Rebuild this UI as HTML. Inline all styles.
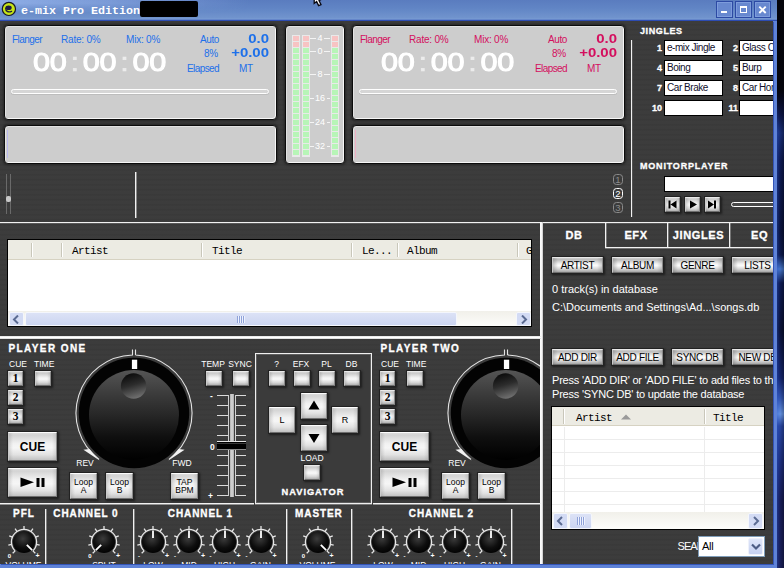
<!DOCTYPE html>
<html><head><meta charset="utf-8"><title>e-mix Pro Edition</title>
<style>
html,body{margin:0;padding:0;}
body{width:784px;height:568px;overflow:hidden;position:relative;background:#0b1640;font-family:"Liberation Sans",sans-serif;}
div,span{box-sizing:border-box;}
.a{position:absolute;}
#wall{position:absolute;left:777px;top:0;width:7px;height:568px;background:linear-gradient(180deg,#04040a 0,#05050c 90px,#0c1440 115px,#1a3078 133px,#0e1a50 160px,#0a1238 230px,#0c1848 255px,#4a7cd0 269px,#0e1a50 283px,#0a1030 330px,#14246a 378px,#3558b4 398px,#6c9cec 414px,#2a48a4 426px,#1e3080 460px,#181c54 500px,#1a1e56 568px);}
#wall2{position:absolute;left:777px;top:95px;width:7px;height:473px;background:linear-gradient(90deg,rgba(40,80,200,.4) 0,rgba(20,40,120,.1) 45%,rgba(0,0,0,.3) 100%);-webkit-mask-image:linear-gradient(transparent 0,#000 35px);mask-image:linear-gradient(transparent 0,#000 35px);}
#win{position:absolute;left:0;top:0;width:777px;height:568px;background:#5f83d8;overflow:hidden;}
#tb{position:absolute;left:0;top:0;width:777px;height:21px;background:linear-gradient(#5a7cbf 0,#6185c5 40%,#7194cd 85%,#7a9dd4 92%,#2d4cb2 95%,#2d4cb2 98%,#3a4630 100%);}
#tbh{position:absolute;left:0;top:0;width:260px;height:13px;background:linear-gradient(90deg,rgba(150,180,235,.85) 0,rgba(150,180,235,.6) 90px,rgba(150,180,235,0) 250px);-webkit-mask-image:linear-gradient(#000 0,#000 25%,transparent 100%);mask-image:linear-gradient(#000 0,#000 25%,transparent 100%);}
#main{position:absolute;left:0;top:21px;width:773px;height:543px;overflow:hidden;box-shadow:1px 1px 0 #3455b8;background-color:#3b3b3b;
 background-image:repeating-linear-gradient(180deg,rgba(255,255,255,.025) 0,rgba(0,0,0,.03) 1px,rgba(255,255,255,.02) 2px,rgba(0,0,0,.04) 3px,rgba(255,255,255,0) 5px);}
.lbl{position:absolute;color:#fff;-webkit-text-stroke:.3px #fff;font-weight:bold;font-size:10px;white-space:nowrap;line-height:12px;height:12px;}
.l12{font-size:12px;line-height:14px;height:14px;}
.c{text-align:center;}
.sm{position:absolute;color:#fff;font-size:8.5px;white-space:nowrap;line-height:10px;height:10px;}
.disp{position:absolute;background:#cdcdcd;border-radius:4px;border:1px solid #0c0c0c;box-shadow:inset 1px 1px 0 #e2e2e2,inset -1px -1px 0 #f6f6f6,0 0 0 1px #2c2c2c,0 0 2px 2px rgba(0,0,0,.18);}
.btn{position:absolute;border:1px solid #e9e9e9;border-right-color:#8a8a8a;border-bottom-color:#6e6e6e;border-left-color:#c9c9c9;background:linear-gradient(90deg,rgba(110,110,110,.25) 0,rgba(110,110,110,0) 3px,rgba(110,110,110,0) calc(100% - 3px),rgba(110,110,110,.2) 100%),linear-gradient(#d6d6d6 0,#cdcdcd 12%,#f1f1f1 42%,#f8f8f8 55%,#d9d9d9 80%,#b0b0b0 100%);box-shadow:0 0 0 1px #222,1px 1px 2px 1px #1c1c1c;color:#000;text-align:center;white-space:nowrap;overflow:hidden;}
.bb{background:linear-gradient(90deg,rgba(110,110,110,.22) 0,rgba(110,110,110,0) 4px,rgba(110,110,110,0) calc(100% - 4px),rgba(110,110,110,.18) 100%),linear-gradient(#dcdcdc 0,#d4d4d4 8%,#f2f2f2 40%,#f6f6f6 55%,#e2e2e2 80%,#c2c2c2 100%);border-top-color:#fcfcfc;}
.tb{background:linear-gradient(90deg,rgba(110,110,110,.4) 0,rgba(110,110,110,0) 5px,rgba(110,110,110,0) calc(100% - 5px),rgba(110,110,110,.3) 100%),linear-gradient(#cfcfcf 0,#bcbcbc 12%,#f3f3f3 42%,#fcfcfc 55%,#d2d2d2 80%,#a4a4a4 100%);font-size:10px;line-height:15px;letter-spacing:-.3px;}
.wl{position:absolute;background:#f2f2f2;}
.bt{position:absolute;white-space:nowrap;font-size:10px;line-height:12px;height:12px;letter-spacing:-.3px;}
.blue{color:#1d70ea;}
.red{color:#d40f5e;}
.big{position:absolute;color:#fff;-webkit-text-stroke:1px #fff;font-size:25.5px;line-height:30px;height:30px;white-space:nowrap;letter-spacing:-.28px;transform-origin:0 0;transform:scaleX(1.2);}
.big span{display:inline-block;width:13.9px;text-align:center;letter-spacing:0;margin-right:-.28px;color:#ececec;-webkit-text-stroke:.6px #ececec;}
.jb{position:absolute;background:#fff;border:1px solid #000;height:16px;font-size:10px;line-height:13px;color:#10102c;padding-left:2px;letter-spacing:-.45px;white-space:nowrap;overflow:hidden;}
.wt{position:absolute;color:#fff;font-size:11px;line-height:13px;height:13px;white-space:nowrap;letter-spacing:0;}
.mono{position:absolute;font-family:"Liberation Mono",monospace;font-size:11px;line-height:12px;height:12px;color:#000;white-space:nowrap;letter-spacing:-.6px;}
.hd{position:absolute;background:#ecebe3;}
.hs{position:absolute;width:1px;background:#c9c7ba;box-shadow:1px 0 0 #fff;}
</style></head><body>
<div id="wall"></div><div id="wall2"></div>
<div id="win">
<div id="tb">
<div id="tbh"></div>
<svg class="a" style="left:312px;top:0" width="14" height="8" viewBox="0 0 14 8"><path d="M2.2 -1 L2.2 3.4 L4.6 1.6 L6.6 5.6 L9 4.6 L7 0.6 L10 -1 Z" fill="#fff" stroke="#0a0a14" stroke-width="1.3"/></svg>
<svg class="a" style="left:0;top:0" width="18" height="18" viewBox="0 0 18 18"><circle cx="8.9" cy="8.9" r="6.6" fill="#c7e516" stroke="#15162a" stroke-width="1.2"/><ellipse cx="8.6" cy="7.7" rx="3.1" ry="2.3" fill="#1d1d42"/><path d="M5.7 8.2 C5.6 11.2 8 12.8 11.6 11.3" fill="none" stroke="#1d1d36" stroke-width="1.3" stroke-linecap="round"/></svg>
<div class="a" style="left:21px;top:3.7px;font-family:'Liberation Mono',monospace;font-weight:bold;font-size:11.67px;line-height:14px;color:#fff;white-space:nowrap;letter-spacing:0">e-mix Pro Edition</div>
<div class="a" style="left:140px;top:1px;width:58px;height:16px;background:#000;border-radius:2px"></div>
<div class="a" style="left:716px;top:1px;width:17px;height:17px;border:1px solid #2c4aa4;background:#6788cf;box-shadow:inset 0 0 0 1px #7d9cdc"></div>
<div class="a" style="left:735px;top:1px;width:17px;height:17px;border:1px solid #2c4aa4;background:#6788cf;box-shadow:inset 0 0 0 1px #7d9cdc"></div>
<div class="a" style="left:754px;top:1px;width:17px;height:17px;border:1px solid #2c4aa4;background:#6788cf;box-shadow:inset 0 0 0 1px #7d9cdc"></div>
<div class="a" style="left:721px;top:10.5px;width:5.5px;height:2.5px;background:#fff"></div>
<div class="a" style="left:740px;top:6px;width:7px;height:7px;border:1px solid #fff;border-top-width:2px"></div>
<svg class="a" style="left:758px;top:5px" width="9" height="9" viewBox="0 0 9 9"><path d="M1.3 1.6 L7.7 8 M7.7 1.6 L1.3 8" stroke="#fff" stroke-width="1.9"/></svg>
</div>
<div id="main">
<div class="disp" style="left:4px;top:4px;width:273px;height:95px"></div>
<div class="disp" style="left:4px;top:104px;width:273px;height:39px"></div>
<div class="a" style="left:7px;top:109px;width:1px;height:28px;background:#b9b9ee"></div>
<div class="bt blue" style="left:12px;top:12.600000000000001px;letter-spacing:-.55px">Flanger</div>
<div class="bt blue" style="left:61px;top:12.600000000000001px;letter-spacing:-.2px">Rate: 0%</div>
<div class="bt blue" style="left:126px;top:12.600000000000001px;letter-spacing:-.2px">Mix: 0%</div>
<div class="bt blue" style="left:200px;top:12.600000000000001px;letter-spacing:-.4px">Auto</div>
<div class="bt blue" style="left:204px;top:26.6px">8%</div>
<div class="bt blue" style="left:187px;top:41.6px;letter-spacing:-.58px">Elapsed</div>
<div class="bt blue" style="left:239px;top:41.6px">MT</div>
<div class="bt blue" style="left:218px;top:11.000000000000002px;width:51px;text-align:right;font-weight:bold;font-size:13px;letter-spacing:0;line-height:13px;height:13px;transform:scaleX(1.15);transform-origin:100% 0">0.0</div>
<div class="bt blue" style="left:218px;top:25.0px;width:51px;text-align:right;font-weight:bold;font-size:13px;letter-spacing:0;line-height:13px;height:13px;transform:scaleX(1.15);transform-origin:100% 0">+0.00</div>
<div class="big" style="left:32.9px;top:26px">00<span>:</span>00<span>:</span>00</div>
<div class="a" style="left:11px;top:68px;width:258px;height:5px;border:1px solid #fff;border-radius:3px;background:#d6d6d6;box-shadow:0 1px 0 #bdbdbd"></div>
<div class="disp" style="left:352px;top:4px;width:273px;height:95px"></div>
<div class="disp" style="left:352px;top:104px;width:273px;height:39px"></div>
<div class="a" style="left:355px;top:109px;width:1px;height:28px;background:#eeb0c4"></div>
<div class="bt red" style="left:360px;top:12.600000000000001px;letter-spacing:-.55px">Flanger</div>
<div class="bt red" style="left:409px;top:12.600000000000001px;letter-spacing:-.2px">Rate: 0%</div>
<div class="bt red" style="left:474px;top:12.600000000000001px;letter-spacing:-.2px">Mix: 0%</div>
<div class="bt red" style="left:548px;top:12.600000000000001px;letter-spacing:-.4px">Auto</div>
<div class="bt red" style="left:552px;top:26.6px">8%</div>
<div class="bt red" style="left:535px;top:41.6px;letter-spacing:-.58px">Elapsed</div>
<div class="bt red" style="left:587px;top:41.6px">MT</div>
<div class="bt red" style="left:566px;top:11.000000000000002px;width:51px;text-align:right;font-weight:bold;font-size:13px;letter-spacing:0;line-height:13px;height:13px;transform:scaleX(1.15);transform-origin:100% 0">0.0</div>
<div class="bt red" style="left:566px;top:25.0px;width:51px;text-align:right;font-weight:bold;font-size:13px;letter-spacing:0;line-height:13px;height:13px;transform:scaleX(1.15);transform-origin:100% 0">+0.00</div>
<div class="big" style="left:380.9px;top:26px">00<span>:</span>00<span>:</span>00</div>
<div class="a" style="left:359px;top:68px;width:258px;height:5px;border:1px solid #fff;border-radius:3px;background:#d6d6d6;box-shadow:0 1px 0 #bdbdbd"></div>
<div class="disp" style="left:285px;top:4px;width:60px;height:139px"></div>
<div class="a" style="left:291.5px;top:14px;width:8px;height:122px;background:#e9e9e9"></div>
<div class="a" style="left:292.5px;top:15px;width:6px;height:5px;background:#f7c3c3"></div>
<div class="a" style="left:292.5px;top:21px;width:6px;height:5px;background:#f7c3c3"></div>
<div class="a" style="left:292.5px;top:27px;width:6px;height:5px;background:#b7f5b7"></div>
<div class="a" style="left:292.5px;top:33px;width:6px;height:5px;background:#b7f5b7"></div>
<div class="a" style="left:292.5px;top:39px;width:6px;height:5px;background:#b7f5b7"></div>
<div class="a" style="left:292.5px;top:45px;width:6px;height:5px;background:#b7f5b7"></div>
<div class="a" style="left:292.5px;top:51px;width:6px;height:5px;background:#b7f5b7"></div>
<div class="a" style="left:292.5px;top:57px;width:6px;height:5px;background:#b7f5b7"></div>
<div class="a" style="left:292.5px;top:63px;width:6px;height:5px;background:#b7f5b7"></div>
<div class="a" style="left:292.5px;top:69px;width:6px;height:5px;background:#b7f5b7"></div>
<div class="a" style="left:292.5px;top:75px;width:6px;height:5px;background:#b7f5b7"></div>
<div class="a" style="left:292.5px;top:81px;width:6px;height:5px;background:#b7f5b7"></div>
<div class="a" style="left:292.5px;top:87px;width:6px;height:5px;background:#b7f5b7"></div>
<div class="a" style="left:292.5px;top:93px;width:6px;height:5px;background:#b7f5b7"></div>
<div class="a" style="left:292.5px;top:99px;width:6px;height:5px;background:#b7f5b7"></div>
<div class="a" style="left:292.5px;top:105px;width:6px;height:5px;background:#b7f5b7"></div>
<div class="a" style="left:292.5px;top:111px;width:6px;height:5px;background:#b7f5b7"></div>
<div class="a" style="left:292.5px;top:117px;width:6px;height:5px;background:#b7f5b7"></div>
<div class="a" style="left:292.5px;top:123px;width:6px;height:5px;background:#b7f5b7"></div>
<div class="a" style="left:292.5px;top:129px;width:6px;height:5px;background:#b7f5b7"></div>
<div class="a" style="left:301.5px;top:14px;width:8px;height:122px;background:#e9e9e9"></div>
<div class="a" style="left:302.5px;top:15px;width:6px;height:5px;background:#f7c3c3"></div>
<div class="a" style="left:302.5px;top:21px;width:6px;height:5px;background:#f7c3c3"></div>
<div class="a" style="left:302.5px;top:27px;width:6px;height:5px;background:#b7f5b7"></div>
<div class="a" style="left:302.5px;top:33px;width:6px;height:5px;background:#b7f5b7"></div>
<div class="a" style="left:302.5px;top:39px;width:6px;height:5px;background:#b7f5b7"></div>
<div class="a" style="left:302.5px;top:45px;width:6px;height:5px;background:#b7f5b7"></div>
<div class="a" style="left:302.5px;top:51px;width:6px;height:5px;background:#b7f5b7"></div>
<div class="a" style="left:302.5px;top:57px;width:6px;height:5px;background:#b7f5b7"></div>
<div class="a" style="left:302.5px;top:63px;width:6px;height:5px;background:#b7f5b7"></div>
<div class="a" style="left:302.5px;top:69px;width:6px;height:5px;background:#b7f5b7"></div>
<div class="a" style="left:302.5px;top:75px;width:6px;height:5px;background:#b7f5b7"></div>
<div class="a" style="left:302.5px;top:81px;width:6px;height:5px;background:#b7f5b7"></div>
<div class="a" style="left:302.5px;top:87px;width:6px;height:5px;background:#b7f5b7"></div>
<div class="a" style="left:302.5px;top:93px;width:6px;height:5px;background:#b7f5b7"></div>
<div class="a" style="left:302.5px;top:99px;width:6px;height:5px;background:#b7f5b7"></div>
<div class="a" style="left:302.5px;top:105px;width:6px;height:5px;background:#b7f5b7"></div>
<div class="a" style="left:302.5px;top:111px;width:6px;height:5px;background:#b7f5b7"></div>
<div class="a" style="left:302.5px;top:117px;width:6px;height:5px;background:#b7f5b7"></div>
<div class="a" style="left:302.5px;top:123px;width:6px;height:5px;background:#b7f5b7"></div>
<div class="a" style="left:302.5px;top:129px;width:6px;height:5px;background:#b7f5b7"></div>
<div class="a" style="left:331.0px;top:14px;width:8px;height:122px;background:#e9e9e9"></div>
<div class="a" style="left:332.0px;top:15px;width:6px;height:5px;background:#f7c3c3"></div>
<div class="a" style="left:332.0px;top:21px;width:6px;height:5px;background:#f7c3c3"></div>
<div class="a" style="left:332.0px;top:27px;width:6px;height:5px;background:#b7f5b7"></div>
<div class="a" style="left:332.0px;top:33px;width:6px;height:5px;background:#b7f5b7"></div>
<div class="a" style="left:332.0px;top:39px;width:6px;height:5px;background:#b7f5b7"></div>
<div class="a" style="left:332.0px;top:45px;width:6px;height:5px;background:#b7f5b7"></div>
<div class="a" style="left:332.0px;top:51px;width:6px;height:5px;background:#b7f5b7"></div>
<div class="a" style="left:332.0px;top:57px;width:6px;height:5px;background:#b7f5b7"></div>
<div class="a" style="left:332.0px;top:63px;width:6px;height:5px;background:#b7f5b7"></div>
<div class="a" style="left:332.0px;top:69px;width:6px;height:5px;background:#b7f5b7"></div>
<div class="a" style="left:332.0px;top:75px;width:6px;height:5px;background:#b7f5b7"></div>
<div class="a" style="left:332.0px;top:81px;width:6px;height:5px;background:#b7f5b7"></div>
<div class="a" style="left:332.0px;top:87px;width:6px;height:5px;background:#b7f5b7"></div>
<div class="a" style="left:332.0px;top:93px;width:6px;height:5px;background:#b7f5b7"></div>
<div class="a" style="left:332.0px;top:99px;width:6px;height:5px;background:#b7f5b7"></div>
<div class="a" style="left:332.0px;top:105px;width:6px;height:5px;background:#b7f5b7"></div>
<div class="a" style="left:332.0px;top:111px;width:6px;height:5px;background:#b7f5b7"></div>
<div class="a" style="left:332.0px;top:117px;width:6px;height:5px;background:#b7f5b7"></div>
<div class="a" style="left:332.0px;top:123px;width:6px;height:5px;background:#b7f5b7"></div>
<div class="a" style="left:332.0px;top:129px;width:6px;height:5px;background:#b7f5b7"></div>
<div class="a" style="left:310px;top:17px;width:20px;height:1px;background:#f4f4f4"></div>
<div class="a c" style="left:316.0px;top:12px;width:8px;height:10px;line-height:10px;font-size:9px;color:#fff;background:#cdcdcd">4</div>
<div class="a" style="left:310px;top:30px;width:20px;height:1px;background:#f4f4f4"></div>
<div class="a c" style="left:316.0px;top:25px;width:8px;height:10px;line-height:10px;font-size:9px;color:#fff;background:#cdcdcd">0</div>
<div class="a" style="left:310px;top:53px;width:20px;height:1px;background:#f4f4f4"></div>
<div class="a c" style="left:316.0px;top:48px;width:8px;height:10px;line-height:10px;font-size:9px;color:#fff;background:#cdcdcd">8</div>
<div class="a" style="left:310px;top:77px;width:20px;height:1px;background:#f4f4f4"></div>
<div class="a c" style="left:313.5px;top:72px;width:13px;height:10px;line-height:10px;font-size:9px;color:#fff;background:#cdcdcd">16</div>
<div class="a" style="left:310px;top:101px;width:20px;height:1px;background:#f4f4f4"></div>
<div class="a c" style="left:313.5px;top:96px;width:13px;height:10px;line-height:10px;font-size:9px;color:#fff;background:#cdcdcd">24</div>
<div class="a" style="left:310px;top:124.5px;width:20px;height:1px;background:#f4f4f4"></div>
<div class="a c" style="left:313.5px;top:119.5px;width:13px;height:10px;line-height:10px;font-size:9px;color:#fff;background:#cdcdcd">32</div>
<div class="a" style="left:6px;top:153px;width:1px;height:40px;background:#6a6a6a"></div>
<div class="a" style="left:10px;top:153px;width:1px;height:40px;background:#6a6a6a"></div>
<div class="a" style="left:6px;top:175px;width:5px;height:6px;background:#c8c8c8;border-radius:2px"></div>
<div class="wl" style="left:135px;top:151px;width:1px;height:46px;box-shadow:1px 0 0 rgba(255,255,255,.4)"></div>
<div class="wl" style="left:0;top:201px;width:774px;height:1px;box-shadow:0 1px 0 rgba(255,255,255,.15)"></div>
<div class="a" style="left:540px;top:201px;width:3px;height:345px;background:linear-gradient(90deg,#fff,#f4f4f4 60%,#bdbdbd)"></div>
<div class="wl" style="left:631px;top:19px;width:1px;height:177px;box-shadow:1px 0 0 rgba(255,255,255,.12)"></div>
<div class="lbl" style="left:640px;top:3.5px;font-size:9px;letter-spacing:.6px">JINGLES</div>
<div class="lbl" style="left:642px;top:21px;width:20px;text-align:right;font-size:9px">1</div>
<div class="jb" style="left:664px;top:19px;width:59px">e-mix Jingle</div>
<div class="lbl" style="left:718px;top:21px;width:20px;text-align:right;font-size:9px">2</div>
<div class="jb" style="left:739px;top:19px;width:59px">Glass Crash</div>
<div class="lbl" style="left:642px;top:41px;width:20px;text-align:right;font-size:9px">4</div>
<div class="jb" style="left:664px;top:39px;width:59px">Boing</div>
<div class="lbl" style="left:718px;top:41px;width:20px;text-align:right;font-size:9px">5</div>
<div class="jb" style="left:739px;top:39px;width:59px">Burp</div>
<div class="lbl" style="left:642px;top:61px;width:20px;text-align:right;font-size:9px">7</div>
<div class="jb" style="left:664px;top:59px;width:59px">Car Brake</div>
<div class="lbl" style="left:718px;top:61px;width:20px;text-align:right;font-size:9px">8</div>
<div class="jb" style="left:739px;top:59px;width:59px">Car Horn</div>
<div class="lbl" style="left:642px;top:81px;width:20px;text-align:right;font-size:9px">10</div>
<div class="jb" style="left:664px;top:79px;width:59px"></div>
<div class="lbl" style="left:718px;top:81px;width:20px;text-align:right;font-size:9px">11</div>
<div class="jb" style="left:739px;top:79px;width:59px"></div>
<div class="lbl" style="left:640px;top:139px;font-size:9px;letter-spacing:.8px">MONITORPLAYER</div>
<div class="a" style="left:664px;top:155px;width:120px;height:16px;background:#fff;border:1px solid #000"></div>
<div class="btn" style="left:665px;top:176px;width:15px;height:15px"></div>
<div class="btn" style="left:685px;top:176px;width:15px;height:15px"></div>
<div class="btn" style="left:705px;top:176px;width:15px;height:15px"></div>
<svg class="a" style="left:665px;top:176px" width="56" height="15" viewBox="0 0 56 15"><path d="M3.5 3.5h2v8h-2zM11.5 3.5v8l-6-4zM25 3.5v8l7-4zM43 3.5v8l6-4zM49 3.5h2v8h-2z" fill="#000"/></svg>
<div class="a" style="left:731px;top:181px;width:60px;height:5px;border:1px solid #fff;border-radius:3px;background:#4a4a4a"></div>
<div class="a c" style="left:613px;top:153.0px;width:10px;height:11px;border:1px solid #8a8a8a;border-radius:3.5px;color:#8a8a8a;font-size:9.5px;line-height:9px">1</div>
<div class="a c" style="left:613px;top:167.0px;width:10px;height:11px;border:1px solid #fff;border-radius:3.5px;color:#fff;font-size:9.5px;line-height:9px">2</div>
<div class="a c" style="left:613px;top:181.0px;width:10px;height:11px;border:1px solid #8a8a8a;border-radius:3.5px;color:#8a8a8a;font-size:9.5px;line-height:9px">3</div>
<div class="wl" style="left:605px;top:226px;width:170px;height:1px;box-shadow:0 1px 0 rgba(255,255,255,.3)"></div>
<div class="wl" style="left:605px;top:202px;width:1px;height:25px;box-shadow:1px 0 0 rgba(255,255,255,.3)"></div>
<div class="wl" style="left:667px;top:202px;width:1px;height:25px;box-shadow:1px 0 0 rgba(255,255,255,.3)"></div>
<div class="wl" style="left:729px;top:202px;width:1px;height:25px;box-shadow:1px 0 0 rgba(255,255,255,.3)"></div>
<div class="lbl l12 c" style="left:539px;top:207px;width:70px;letter-spacing:.6px;font-size:11px">DB</div>
<div class="lbl l12 c" style="left:601px;top:207px;width:70px;letter-spacing:.6px;font-size:11px">EFX</div>
<div class="lbl l12 c" style="left:663.5px;top:207px;width:70px;letter-spacing:.6px;font-size:11px">JINGLES</div>
<div class="lbl l12 c" style="left:724.5px;top:207px;width:70px;letter-spacing:.6px;font-size:11px">EQ</div>
<div class="btn tb" style="left:552px;top:236px;width:51px;height:16px">ARTIST</div>
<div class="btn tb" style="left:552px;top:328px;width:51px;height:16px">ADD DIR</div>
<div class="btn tb" style="left:612px;top:236px;width:51px;height:16px">ALBUM</div>
<div class="btn tb" style="left:612px;top:328px;width:51px;height:16px">ADD FILE</div>
<div class="btn tb" style="left:672px;top:236px;width:51px;height:16px">GENRE</div>
<div class="btn tb" style="left:672px;top:328px;width:51px;height:16px">SYNC DB</div>
<div class="btn tb" style="left:732px;top:236px;width:51px;height:16px">LISTS</div>
<div class="btn tb" style="left:732px;top:328px;width:51px;height:16px">NEW DB</div>
<div class="wt" style="left:552px;top:262px">0 track(s) in database</div>
<div class="wt" style="left:552px;top:280px">C:\Documents and Settings\Ad...\songs.db</div>
<div class="wt" style="left:552px;top:353px;letter-spacing:-.2px">Press 'ADD DIR' or 'ADD FILE' to add files to the database</div>
<div class="wt" style="left:552px;top:367px;letter-spacing:-.2px">Press 'SYNC DB' to update the database</div>
<div class="a" style="left:551px;top:385px;width:214px;height:124px;background:#fff;border:1px solid #000;overflow:hidden">
<div class="hd" style="left:0;top:0;width:214px;height:19px;border-bottom:1px solid #d6d2c2"></div>
<div class="hs" style="left:11px;top:2px;height:15px"></div>
<div class="hs" style="left:152px;top:2px;height:15px"></div>
<div class="mono" style="left:24px;top:5px">Artist</div>
<div class="mono" style="left:161px;top:5px">Title</div>
<svg class="a" style="left:69px;top:7px" width="10" height="6" viewBox="0 0 10 6"><path d="M0 5.5L5 0.5L10 5.5z" fill="#9a9a9a"/></svg>
<div class="a" style="left:0;top:32px;width:214px;height:1px;background:#ececec"></div>
<div class="a" style="left:0;top:45px;width:214px;height:1px;background:#ececec"></div>
<div class="a" style="left:0;top:58px;width:214px;height:1px;background:#ececec"></div>
<div class="a" style="left:0;top:71px;width:214px;height:1px;background:#ececec"></div>
<div class="a" style="left:0;top:84px;width:214px;height:1px;background:#ececec"></div>
<div class="a" style="left:0;top:97px;width:214px;height:1px;background:#ececec"></div>
<div class="a" style="left:0;top:110px;width:214px;height:1px;background:#ececec"></div>
<div class="a" style="left:12px;top:20px;width:1px;height:86px;background:#ececec"></div>
<div class="a" style="left:152px;top:20px;width:1px;height:86px;background:#ececec"></div>
<div class="a" style="left:0;top:105px;width:214px;height:17px;background:linear-gradient(#f1f0ea,#fdfdfb)"></div>
<div class="a" style="left:1px;top:106px;width:15px;height:16px;background:#d3dbf4;border:1px solid #f4f6fc;border-radius:2px"></div>
<div class="a" style="left:17px;top:106px;width:23px;height:16px;background:linear-gradient(#dce2f6,#ccd5f1);border:1px solid #f4f6fc;border-radius:2px"></div>
<div class="a" style="left:196px;top:106px;width:15px;height:16px;background:#d3dbf4;border:1px solid #f4f6fc;border-radius:2px"></div>
<svg class="a" style="left:4px;top:109px" width="8" height="10" viewBox="0 0 8 10"><path d="M6 1L2 5L6 9" fill="none" stroke="#5b6b92" stroke-width="2"/></svg>
<svg class="a" style="left:200px;top:109px" width="8" height="10" viewBox="0 0 8 10"><path d="M2 1L6 5L2 9" fill="none" stroke="#5b6b92" stroke-width="2"/></svg>
<div class="a" style="left:25px;top:110px;width:8px;height:8px;background:repeating-linear-gradient(90deg,#8fa2d8 0,#8fa2d8 1px,#eef2ff 1px,#eef2ff 2px)"></div>
</div>
<div class="wt" style="left:677.5px;top:519px;letter-spacing:-.9px">SEARCH</div>
<div class="a" style="left:698px;top:515px;width:67px;height:21px;background:#fff;border:1px solid #7f9db9"></div>
<div class="a" style="left:702px;top:519px;font-size:11px;line-height:13px;color:#000;letter-spacing:-.3px">All</div>
<div class="a" style="left:748px;top:517px;width:15px;height:17px;background:linear-gradient(#dfe6f9,#c6d1f1);border:1px solid #eef1fb;border-radius:2px"></div>
<svg class="a" style="left:751px;top:522px" width="10" height="8" viewBox="0 0 10 8"><path d="M1 1.5L5 5.5L9 1.5" fill="none" stroke="#4d5d84" stroke-width="2.2"/></svg>
<div class="a" style="left:7px;top:218px;width:525px;height:88px;background:#fff;border:1px solid #000;overflow:hidden">
<div class="hd" style="left:0;top:0;width:525px;height:20px;border-bottom:1px solid #d6d2c2"></div>
<div class="hs" style="left:23px;top:3px;height:14px"></div>
<div class="hs" style="left:53px;top:3px;height:14px"></div>
<div class="hs" style="left:193px;top:3px;height:14px"></div>
<div class="hs" style="left:343px;top:3px;height:14px"></div>
<div class="hs" style="left:389px;top:3px;height:14px"></div>
<div class="hs" style="left:509px;top:3px;height:14px"></div>
<div class="mono" style="left:64px;top:4.5px">Artist</div>
<div class="mono" style="left:204px;top:4.5px">Title</div>
<div class="mono" style="left:354px;top:4.5px">Le...</div>
<div class="mono" style="left:399px;top:4.5px">Album</div>
<div class="mono" style="left:518px;top:4.5px">Genre</div>
<div class="a" style="left:0;top:71px;width:525px;height:16px;background:linear-gradient(#f1f0ea,#fdfdfb)"></div>
<div class="a" style="left:1px;top:72px;width:15px;height:14px;background:#d3dbf4;border:1px solid #f4f6fc;border-radius:2px"></div>
<div class="a" style="left:17px;top:72px;width:432px;height:14px;background:linear-gradient(#dce2f6,#ccd5f1);border:1px solid #f4f6fc;border-radius:2px"></div>
<div class="a" style="left:508px;top:72px;width:15px;height:14px;background:#d3dbf4;border:1px solid #f4f6fc;border-radius:2px"></div>
<svg class="a" style="left:4px;top:74.5px" width="8" height="9"viewBox="0 0 8 9"><path d="M6 0.5L2 4.5L6 8.5" fill="none" stroke="#5b6b92" stroke-width="2"/></svg>
<svg class="a" style="left:512px;top:74.5px" width="8" height="9" viewBox="0 0 8 9"><path d="M2 0.5L6 4.5L2 8.5" fill="none" stroke="#5b6b92" stroke-width="2"/></svg>
<div class="a" style="left:229px;top:75.5px;width:8px;height:7px;background:repeating-linear-gradient(90deg,#8fa2d8 0,#8fa2d8 1px,#eef2ff 1px,#eef2ff 2px)"></div>
</div>
<div class="a" style="left:0;top:315px;width:541px;height:3px;background:linear-gradient(#d8d8d8,#fff 33%,#fff 67%,#c4c4c4)"></div>
<div class="wl" style="left:0;top:482px;width:541px;height:1px;box-shadow:0 1px 0 rgba(255,255,255,.45)"></div>
<div class="a" style="left:0;top:317px;width:540px;height:226px;overflow:hidden"><div class="a" style="left:0;top:-317px;width:800px;height:600px">
<div class="lbl" style="left:8.5px;top:322.2px;font-size:10px;letter-spacing:1.4px">PLAYER ONE</div>
<div class="sm" style="left:9px;top:338px">CUE</div>
<div class="sm" style="left:34px;top:338px">TIME</div>
<div class="btn" style="left:8px;top:350px;width:15px;height:15px;font-family:'Liberation Serif',serif;font-size:11.5px;font-weight:bold;line-height:13px">1</div>
<div class="btn" style="left:8px;top:369px;width:15px;height:15px;font-family:'Liberation Serif',serif;font-size:11.5px;font-weight:bold;line-height:13px">2</div>
<div class="btn" style="left:8px;top:388px;width:15px;height:15px;font-family:'Liberation Serif',serif;font-size:11.5px;font-weight:bold;line-height:13px">3</div>
<div class="btn" style="left:35px;top:350px;width:16px;height:15px"></div>
<div class="btn bb" style="left:8px;top:411px;width:49px;height:29px;font-weight:bold;font-size:12px;line-height:28.5px">CUE</div>
<div class="btn bb" style="left:8px;top:447px;width:49px;height:29px"></div>
<svg class="a" style="left:8px;top:447px" width="49" height="29" viewBox="0 0 49 29"><path d="M12.5 9.5v9.6l13.5-4.8zM28.5 10h3v9h-3zM33.5 10h3v9h-3z" fill="#000"/></svg>
<svg class="a" style="left:68px;top:326px" width="132" height="132" viewBox="-66 -66 132 132"><defs><linearGradient id="kg134" x1="0" y1="0" x2="0" y2="1"><stop offset="0" stop-color="#555"/><stop offset=".25" stop-color="#3d3d3d"/><stop offset=".5" stop-color="#272727"/><stop offset=".75" stop-color="#0f0f0f"/><stop offset="1" stop-color="#000"/></linearGradient><linearGradient id="dg134" x1="0.35" y1="0" x2="0.65" y2="1"><stop offset="0" stop-color="#0a0a0a"/><stop offset=".45" stop-color="#2c2c2c"/><stop offset="1" stop-color="#747474"/></linearGradient></defs><path d="M-34.91 46.32 A58 58 0 0 1 -1.52 -57.98 v-5.5 M1.52 -57.98 v-5.5 M1.52 -57.98 A58 58 0 0 1 34.91 46.32" fill="none" stroke="#e4e4e4" stroke-width="1.1"/><path d="M-50.56 36.74 L-34.44 47.41 L-44.61 36.12 z" fill="#f2f2f2"/><path d="M50.56 36.74 L34.44 47.41 L44.61 36.12 z" fill="#f2f2f2"/><circle cx="0" cy="0" r="55.2" fill="#030303"/><circle cx="0" cy="2" r="45" fill="url(#kg134)"/><circle cx="-0.4" cy="-27" r="12.7" fill="url(#dg134)"/><rect x="-2.1" y="-53.3" width="5.3" height="9.3" fill="#fff"/></svg>
<div class="sm c" style="left:70px;top:437px;width:30px">REV</div>
<div class="sm c" style="left:167px;top:437px;width:30px">FWD</div>
<div class="btn bb" style="left:70px;top:452px;width:27px;height:26px;font-size:8.5px;line-height:8px;padding-top:4px">Loop<br>A</div>
<div class="btn bb" style="left:106px;top:452px;width:27px;height:26px;font-size:8.5px;line-height:8px;padding-top:4px">Loop<br>B</div>
<div class="btn bb" style="left:171px;top:452px;width:27px;height:26px;font-size:8.5px;line-height:8px;padding-top:4px">TAP<br>BPM</div>
<div class="sm c" style="left:198px;top:338px;width:30px">TEMP</div>
<div class="sm c" style="left:225px;top:338px;width:30px">SYNC</div>
<div class="btn" style="left:206px;top:350px;width:16px;height:15px"></div>
<div class="btn" style="left:233px;top:350px;width:16px;height:15px"></div>
<div class="a" style="left:217px;top:374px;width:11px;height:1px;background:#dadada"></div>
<div class="a" style="left:235px;top:374px;width:11px;height:1px;background:#dadada"></div>
<div class="a" style="left:217px;top:384px;width:11px;height:1px;background:#dadada"></div>
<div class="a" style="left:235px;top:384px;width:11px;height:1px;background:#dadada"></div>
<div class="a" style="left:217px;top:394px;width:11px;height:1px;background:#dadada"></div>
<div class="a" style="left:235px;top:394px;width:11px;height:1px;background:#dadada"></div>
<div class="a" style="left:217px;top:404px;width:11px;height:1px;background:#dadada"></div>
<div class="a" style="left:235px;top:404px;width:11px;height:1px;background:#dadada"></div>
<div class="a" style="left:217px;top:414px;width:11px;height:1px;background:#dadada"></div>
<div class="a" style="left:235px;top:414px;width:11px;height:1px;background:#dadada"></div>
<div class="a" style="left:217px;top:424px;width:11px;height:1px;background:#dadada"></div>
<div class="a" style="left:235px;top:424px;width:11px;height:1px;background:#dadada"></div>
<div class="a" style="left:217px;top:434px;width:11px;height:1px;background:#dadada"></div>
<div class="a" style="left:235px;top:434px;width:11px;height:1px;background:#dadada"></div>
<div class="a" style="left:217px;top:444px;width:11px;height:1px;background:#dadada"></div>
<div class="a" style="left:235px;top:444px;width:11px;height:1px;background:#dadada"></div>
<div class="a" style="left:217px;top:454px;width:11px;height:1px;background:#dadada"></div>
<div class="a" style="left:235px;top:454px;width:11px;height:1px;background:#dadada"></div>
<div class="a" style="left:217px;top:464px;width:11px;height:1px;background:#dadada"></div>
<div class="a" style="left:235px;top:464px;width:11px;height:1px;background:#dadada"></div>
<div class="a" style="left:217px;top:474px;width:11px;height:1px;background:#dadada"></div>
<div class="a" style="left:235px;top:474px;width:11px;height:1px;background:#dadada"></div>
<div class="a" style="left:228px;top:374px;width:1px;height:101px;background:#cfcfcf"></div>
<div class="a" style="left:235px;top:374px;width:1px;height:101px;background:#cfcfcf"></div>
<div class="a" style="left:229.5px;top:373px;width:4px;height:103px;background:linear-gradient(90deg,#b0b0b0,#d6d6d6 50%,#a8a8a8)"></div>
<div class="a" style="left:217px;top:420px;width:29px;height:9px;background:#000;border-top:1px solid #e4e4e4;border-bottom:1px solid #8a8a8a;"><div class="a" style="left:0;top:1px;width:29px;height:1px;background:#3a3a3a"></div></div>
<div class="sm" style="left:210px;top:369.5px;font-weight:bold">-</div>
<div class="sm" style="left:210px;top:420.5px;font-weight:bold">0</div>
<div class="sm" style="left:208px;top:469.5px;font-weight:bold">+</div>
<div class="lbl" style="left:380.5px;top:322.2px;font-size:10px;letter-spacing:1.4px">PLAYER TWO</div>
<div class="sm" style="left:381px;top:338px">CUE</div>
<div class="sm" style="left:406px;top:338px">TIME</div>
<div class="btn" style="left:380px;top:350px;width:15px;height:15px;font-family:'Liberation Serif',serif;font-size:11.5px;font-weight:bold;line-height:13px">1</div>
<div class="btn" style="left:380px;top:369px;width:15px;height:15px;font-family:'Liberation Serif',serif;font-size:11.5px;font-weight:bold;line-height:13px">2</div>
<div class="btn" style="left:380px;top:388px;width:15px;height:15px;font-family:'Liberation Serif',serif;font-size:11.5px;font-weight:bold;line-height:13px">3</div>
<div class="btn" style="left:407px;top:350px;width:16px;height:15px"></div>
<div class="btn bb" style="left:380px;top:411px;width:49px;height:29px;font-weight:bold;font-size:12px;line-height:28.5px">CUE</div>
<div class="btn bb" style="left:380px;top:447px;width:49px;height:29px"></div>
<svg class="a" style="left:380px;top:447px" width="49" height="29" viewBox="0 0 49 29"><path d="M12.5 9.5v9.6l13.5-4.8zM28.5 10h3v9h-3zM33.5 10h3v9h-3z" fill="#000"/></svg>
<svg class="a" style="left:440px;top:326px" width="132" height="132" viewBox="-66 -66 132 132"><defs><linearGradient id="kg506" x1="0" y1="0" x2="0" y2="1"><stop offset="0" stop-color="#555"/><stop offset=".25" stop-color="#3d3d3d"/><stop offset=".5" stop-color="#272727"/><stop offset=".75" stop-color="#0f0f0f"/><stop offset="1" stop-color="#000"/></linearGradient><linearGradient id="dg506" x1="0.35" y1="0" x2="0.65" y2="1"><stop offset="0" stop-color="#0a0a0a"/><stop offset=".45" stop-color="#2c2c2c"/><stop offset="1" stop-color="#747474"/></linearGradient></defs><path d="M-34.91 46.32 A58 58 0 0 1 -1.52 -57.98 v-5.5 M1.52 -57.98 v-5.5 M1.52 -57.98 A58 58 0 0 1 34.91 46.32" fill="none" stroke="#e4e4e4" stroke-width="1.1"/><path d="M-50.56 36.74 L-34.44 47.41 L-44.61 36.12 z" fill="#f2f2f2"/><path d="M50.56 36.74 L34.44 47.41 L44.61 36.12 z" fill="#f2f2f2"/><circle cx="0" cy="0" r="55.2" fill="#030303"/><circle cx="0" cy="2" r="45" fill="url(#kg506)"/><circle cx="-0.4" cy="-27" r="12.7" fill="url(#dg506)"/><rect x="-2.1" y="-53.3" width="5.3" height="9.3" fill="#fff"/></svg>
<div class="sm c" style="left:442px;top:437px;width:30px">REV</div>
<div class="sm c" style="left:539px;top:437px;width:30px">FWD</div>
<div class="btn bb" style="left:442px;top:452px;width:27px;height:26px;font-size:8.5px;line-height:8px;padding-top:4px">Loop<br>A</div>
<div class="btn bb" style="left:478px;top:452px;width:27px;height:26px;font-size:8.5px;line-height:8px;padding-top:4px">Loop<br>B</div>
<div class="btn bb" style="left:543px;top:452px;width:27px;height:26px;font-size:8.5px;line-height:8px;padding-top:4px">TAP<br>BPM</div>
<div class="sm c" style="left:570px;top:338px;width:30px">TEMP</div>
<div class="sm c" style="left:597px;top:338px;width:30px">SYNC</div>
<div class="btn" style="left:578px;top:350px;width:16px;height:15px"></div>
<div class="btn" style="left:605px;top:350px;width:16px;height:15px"></div>
<div class="a" style="left:589px;top:374px;width:11px;height:1px;background:#dadada"></div>
<div class="a" style="left:607px;top:374px;width:11px;height:1px;background:#dadada"></div>
<div class="a" style="left:589px;top:384px;width:11px;height:1px;background:#dadada"></div>
<div class="a" style="left:607px;top:384px;width:11px;height:1px;background:#dadada"></div>
<div class="a" style="left:589px;top:394px;width:11px;height:1px;background:#dadada"></div>
<div class="a" style="left:607px;top:394px;width:11px;height:1px;background:#dadada"></div>
<div class="a" style="left:589px;top:404px;width:11px;height:1px;background:#dadada"></div>
<div class="a" style="left:607px;top:404px;width:11px;height:1px;background:#dadada"></div>
<div class="a" style="left:589px;top:414px;width:11px;height:1px;background:#dadada"></div>
<div class="a" style="left:607px;top:414px;width:11px;height:1px;background:#dadada"></div>
<div class="a" style="left:589px;top:424px;width:11px;height:1px;background:#dadada"></div>
<div class="a" style="left:607px;top:424px;width:11px;height:1px;background:#dadada"></div>
<div class="a" style="left:589px;top:434px;width:11px;height:1px;background:#dadada"></div>
<div class="a" style="left:607px;top:434px;width:11px;height:1px;background:#dadada"></div>
<div class="a" style="left:589px;top:444px;width:11px;height:1px;background:#dadada"></div>
<div class="a" style="left:607px;top:444px;width:11px;height:1px;background:#dadada"></div>
<div class="a" style="left:589px;top:454px;width:11px;height:1px;background:#dadada"></div>
<div class="a" style="left:607px;top:454px;width:11px;height:1px;background:#dadada"></div>
<div class="a" style="left:589px;top:464px;width:11px;height:1px;background:#dadada"></div>
<div class="a" style="left:607px;top:464px;width:11px;height:1px;background:#dadada"></div>
<div class="a" style="left:589px;top:474px;width:11px;height:1px;background:#dadada"></div>
<div class="a" style="left:607px;top:474px;width:11px;height:1px;background:#dadada"></div>
<div class="a" style="left:600px;top:374px;width:1px;height:101px;background:#cfcfcf"></div>
<div class="a" style="left:607px;top:374px;width:1px;height:101px;background:#cfcfcf"></div>
<div class="a" style="left:601.5px;top:373px;width:4px;height:103px;background:linear-gradient(90deg,#b0b0b0,#d6d6d6 50%,#a8a8a8)"></div>
<div class="a" style="left:589px;top:420px;width:29px;height:9px;background:#000;border-top:1px solid #e4e4e4;border-bottom:1px solid #8a8a8a;"><div class="a" style="left:0;top:1px;width:29px;height:1px;background:#3a3a3a"></div></div>
<div class="sm" style="left:582px;top:369.5px;font-weight:bold">-</div>
<div class="sm" style="left:582px;top:420.5px;font-weight:bold">0</div>
<div class="sm" style="left:580px;top:469.5px;font-weight:bold">+</div>
</div></div>
<div class="a" style="left:254px;top:331px;width:119px;height:153px;border-left:1px solid #3b3b3b;border-right:1px solid #3b3b3b;background:#3b3b3b"></div>
<div class="a" style="left:255px;top:332px;width:117px;height:151px;border:1px solid #efefef;box-shadow:inset 0 0 0 1px rgba(255,255,255,.18),0 1px 0 rgba(255,255,255,.3)"></div>
<div class="sm c" style="left:261.5px;top:338px;width:30px">?</div>
<div class="btn" style="left:269px;top:350px;width:16px;height:15px"></div>
<div class="sm c" style="left:286px;top:338px;width:30px">EFX</div>
<div class="btn" style="left:293.5px;top:350px;width:16px;height:15px"></div>
<div class="sm c" style="left:311.5px;top:338px;width:30px">PL</div>
<div class="btn" style="left:319px;top:350px;width:16px;height:15px"></div>
<div class="sm c" style="left:336.5px;top:338px;width:30px">DB</div>
<div class="btn" style="left:344px;top:350px;width:16px;height:15px"></div>
<div class="btn bb" style="left:301px;top:372px;width:26px;height:26px"></div>
<div class="btn bb" style="left:301px;top:404px;width:26px;height:26px"></div>
<div class="btn bb" style="left:269px;top:386px;width:26px;height:26px;font-size:9px;line-height:24px">L</div>
<div class="btn bb" style="left:332px;top:386px;width:26px;height:26px;font-size:9px;line-height:24px">R</div>
<svg class="a" style="left:301px;top:372px" width="26" height="58" viewBox="0 0 26 58"><path d="M13 7.5L18.5 16.5H7.5zM13 50L18.5 41H7.5z" fill="#000"/></svg>
<div class="sm c" style="left:297px;top:432px;width:30px">LOAD</div>
<div class="btn" style="left:304px;top:444px;width:16px;height:15px"></div>
<div class="lbl c" style="left:273px;top:465px;width:80px;letter-spacing:.95px;font-size:9.3px">NAVIGATOR</div>
<div class="wl" style="left:45px;top:488px;width:1px;height:60px;box-shadow:1px 0 0 rgba(255,255,255,.35)"></div>
<div class="wl" style="left:133px;top:488px;width:1px;height:60px;box-shadow:1px 0 0 rgba(255,255,255,.35)"></div>
<div class="wl" style="left:286px;top:488px;width:1px;height:60px;box-shadow:1px 0 0 rgba(255,255,255,.35)"></div>
<div class="wl" style="left:351px;top:488px;width:1px;height:60px;box-shadow:1px 0 0 rgba(255,255,255,.35)"></div>
<div class="wl" style="left:511px;top:488px;width:1px;height:60px;box-shadow:1px 0 0 rgba(255,255,255,.35)"></div>
<div class="lbl c" style="left:-16.1px;top:486.5px;width:80px;letter-spacing:.9px;font-size:10px">PFL</div>
<div class="lbl c" style="left:45.9px;top:486.5px;width:80px;letter-spacing:.9px;font-size:10px">CHANNEL 0</div>
<div class="lbl c" style="left:160.4px;top:486.5px;width:80px;letter-spacing:.9px;font-size:10px">CHANNEL 1</div>
<div class="lbl c" style="left:278.9px;top:486.5px;width:80px;letter-spacing:.9px;font-size:10px">MASTER</div>
<div class="lbl c" style="left:401.4px;top:486.5px;width:80px;letter-spacing:.9px;font-size:10px">CHANNEL 2</div>
<svg class="a" style="left:3.5px;top:501.4px" width="40" height="40" viewBox="-20 -20 40 40"><defs><radialGradient id="sk23" cx=".45" cy=".35" r=".7"><stop offset="0" stop-color="#3c3c3c"/><stop offset=".6" stop-color="#0e0e0e"/><stop offset="1" stop-color="#000"/></radialGradient></defs><path d="M-8.91 8.91 A12.6 12.6 0 1 1 8.91 8.91" fill="none" stroke="#e6e6e6" stroke-width="1.3"/><path d="M-8.84 8.84L-11.31 11.31" stroke="#e6e6e6" stroke-width="1.3"/><path d="M-12.26 2.44L-15.69 3.12" stroke="#e6e6e6" stroke-width="1.3"/><path d="M-11.55 -4.78L-14.78 -6.12" stroke="#e6e6e6" stroke-width="1.3"/><path d="M-6.94 -10.39L-8.89 -13.30" stroke="#e6e6e6" stroke-width="1.3"/><path d="M0.00 -12.50L0.00 -16.00" stroke="#e6e6e6" stroke-width="1.3"/><path d="M6.94 -10.39L8.89 -13.30" stroke="#e6e6e6" stroke-width="1.3"/><path d="M11.55 -4.78L14.78 -6.12" stroke="#e6e6e6" stroke-width="1.3"/><path d="M12.26 2.44L15.69 3.12" stroke="#e6e6e6" stroke-width="1.3"/><path d="M8.84 8.84L11.31 11.31" stroke="#e6e6e6" stroke-width="1.3"/><circle cx="0" cy="0" r="11.1" fill="url(#sk23)"/><path d="M2.83 2.83L8.13 8.13" stroke="#fff" stroke-width="1.8"/></svg>
<div class="sm c" style="left:4.5px;top:530.4px;width:10px;font-weight:bold;font-size:6px">0</div>
<div class="sm c" style="left:32.5px;top:530.4px;width:10px;font-weight:bold;font-size:7px">+</div>
<div class="sm c" style="left:3.5px;top:538.6px;width:40px">VOLUME</div>
<svg class="a" style="left:84px;top:501.4px" width="40" height="40" viewBox="-20 -20 40 40"><defs><radialGradient id="sk104" cx=".45" cy=".35" r=".7"><stop offset="0" stop-color="#3c3c3c"/><stop offset=".6" stop-color="#0e0e0e"/><stop offset="1" stop-color="#000"/></radialGradient></defs><path d="M-8.91 8.91 A12.6 12.6 0 1 1 8.91 8.91" fill="none" stroke="#e6e6e6" stroke-width="1.3"/><path d="M-8.84 8.84L-11.31 11.31" stroke="#e6e6e6" stroke-width="1.3"/><path d="M-12.26 2.44L-15.69 3.12" stroke="#e6e6e6" stroke-width="1.3"/><path d="M-11.55 -4.78L-14.78 -6.12" stroke="#e6e6e6" stroke-width="1.3"/><path d="M-6.94 -10.39L-8.89 -13.30" stroke="#e6e6e6" stroke-width="1.3"/><path d="M0.00 -12.50L0.00 -16.00" stroke="#e6e6e6" stroke-width="1.3"/><path d="M6.94 -10.39L8.89 -13.30" stroke="#e6e6e6" stroke-width="1.3"/><path d="M11.55 -4.78L14.78 -6.12" stroke="#e6e6e6" stroke-width="1.3"/><path d="M12.26 2.44L15.69 3.12" stroke="#e6e6e6" stroke-width="1.3"/><path d="M8.84 8.84L11.31 11.31" stroke="#e6e6e6" stroke-width="1.3"/><circle cx="0" cy="0" r="11.1" fill="url(#sk104)"/><path d="M-2.83 2.83L-8.13 8.13" stroke="#fff" stroke-width="1.8"/></svg>
<div class="sm c" style="left:85px;top:530.4px;width:10px;font-weight:bold;font-size:6px">0</div>
<div class="sm c" style="left:113px;top:530.4px;width:10px;font-weight:bold;font-size:7px">+</div>
<div class="sm c" style="left:84px;top:538.6px;width:40px">SPLIT</div>
<svg class="a" style="left:133px;top:501.4px" width="40" height="40" viewBox="-20 -20 40 40"><defs><radialGradient id="sk153" cx=".45" cy=".35" r=".7"><stop offset="0" stop-color="#3c3c3c"/><stop offset=".6" stop-color="#0e0e0e"/><stop offset="1" stop-color="#000"/></radialGradient></defs><path d="M-8.91 8.91 A12.6 12.6 0 1 1 8.91 8.91" fill="none" stroke="#e6e6e6" stroke-width="1.3"/><path d="M-8.84 8.84L-11.31 11.31" stroke="#e6e6e6" stroke-width="1.3"/><path d="M-12.26 2.44L-15.69 3.12" stroke="#e6e6e6" stroke-width="1.3"/><path d="M-11.55 -4.78L-14.78 -6.12" stroke="#e6e6e6" stroke-width="1.3"/><path d="M-6.94 -10.39L-8.89 -13.30" stroke="#e6e6e6" stroke-width="1.3"/><path d="M0.00 -12.50L0.00 -16.00" stroke="#e6e6e6" stroke-width="1.3"/><path d="M6.94 -10.39L8.89 -13.30" stroke="#e6e6e6" stroke-width="1.3"/><path d="M11.55 -4.78L14.78 -6.12" stroke="#e6e6e6" stroke-width="1.3"/><path d="M12.26 2.44L15.69 3.12" stroke="#e6e6e6" stroke-width="1.3"/><path d="M8.84 8.84L11.31 11.31" stroke="#e6e6e6" stroke-width="1.3"/><circle cx="0" cy="0" r="11.1" fill="url(#sk153)"/><path d="M0.00 -4.00L0.00 -11.50" stroke="#fff" stroke-width="1.8"/></svg>
<div class="sm c" style="left:134px;top:530.4px;width:10px;font-weight:bold;font-size:6px">-</div>
<div class="sm c" style="left:162px;top:530.4px;width:10px;font-weight:bold;font-size:7px">+</div>
<div class="sm c" style="left:133px;top:538.6px;width:40px">LOW</div>
<svg class="a" style="left:169px;top:501.4px" width="40" height="40" viewBox="-20 -20 40 40"><defs><radialGradient id="sk189" cx=".45" cy=".35" r=".7"><stop offset="0" stop-color="#3c3c3c"/><stop offset=".6" stop-color="#0e0e0e"/><stop offset="1" stop-color="#000"/></radialGradient></defs><path d="M-8.91 8.91 A12.6 12.6 0 1 1 8.91 8.91" fill="none" stroke="#e6e6e6" stroke-width="1.3"/><path d="M-8.84 8.84L-11.31 11.31" stroke="#e6e6e6" stroke-width="1.3"/><path d="M-12.26 2.44L-15.69 3.12" stroke="#e6e6e6" stroke-width="1.3"/><path d="M-11.55 -4.78L-14.78 -6.12" stroke="#e6e6e6" stroke-width="1.3"/><path d="M-6.94 -10.39L-8.89 -13.30" stroke="#e6e6e6" stroke-width="1.3"/><path d="M0.00 -12.50L0.00 -16.00" stroke="#e6e6e6" stroke-width="1.3"/><path d="M6.94 -10.39L8.89 -13.30" stroke="#e6e6e6" stroke-width="1.3"/><path d="M11.55 -4.78L14.78 -6.12" stroke="#e6e6e6" stroke-width="1.3"/><path d="M12.26 2.44L15.69 3.12" stroke="#e6e6e6" stroke-width="1.3"/><path d="M8.84 8.84L11.31 11.31" stroke="#e6e6e6" stroke-width="1.3"/><circle cx="0" cy="0" r="11.1" fill="url(#sk189)"/><path d="M0.00 -4.00L0.00 -11.50" stroke="#fff" stroke-width="1.8"/></svg>
<div class="sm c" style="left:170px;top:530.4px;width:10px;font-weight:bold;font-size:6px">-</div>
<div class="sm c" style="left:198px;top:530.4px;width:10px;font-weight:bold;font-size:7px">+</div>
<div class="sm c" style="left:169px;top:538.6px;width:40px">MID</div>
<svg class="a" style="left:204.5px;top:501.4px" width="40" height="40" viewBox="-20 -20 40 40"><defs><radialGradient id="sk224" cx=".45" cy=".35" r=".7"><stop offset="0" stop-color="#3c3c3c"/><stop offset=".6" stop-color="#0e0e0e"/><stop offset="1" stop-color="#000"/></radialGradient></defs><path d="M-8.91 8.91 A12.6 12.6 0 1 1 8.91 8.91" fill="none" stroke="#e6e6e6" stroke-width="1.3"/><path d="M-8.84 8.84L-11.31 11.31" stroke="#e6e6e6" stroke-width="1.3"/><path d="M-12.26 2.44L-15.69 3.12" stroke="#e6e6e6" stroke-width="1.3"/><path d="M-11.55 -4.78L-14.78 -6.12" stroke="#e6e6e6" stroke-width="1.3"/><path d="M-6.94 -10.39L-8.89 -13.30" stroke="#e6e6e6" stroke-width="1.3"/><path d="M0.00 -12.50L0.00 -16.00" stroke="#e6e6e6" stroke-width="1.3"/><path d="M6.94 -10.39L8.89 -13.30" stroke="#e6e6e6" stroke-width="1.3"/><path d="M11.55 -4.78L14.78 -6.12" stroke="#e6e6e6" stroke-width="1.3"/><path d="M12.26 2.44L15.69 3.12" stroke="#e6e6e6" stroke-width="1.3"/><path d="M8.84 8.84L11.31 11.31" stroke="#e6e6e6" stroke-width="1.3"/><circle cx="0" cy="0" r="11.1" fill="url(#sk224)"/><path d="M0.00 -4.00L0.00 -11.50" stroke="#fff" stroke-width="1.8"/></svg>
<div class="sm c" style="left:205.5px;top:530.4px;width:10px;font-weight:bold;font-size:6px">-</div>
<div class="sm c" style="left:233.5px;top:530.4px;width:10px;font-weight:bold;font-size:7px">+</div>
<div class="sm c" style="left:204.5px;top:538.6px;width:40px">HIGH</div>
<svg class="a" style="left:240.5px;top:501.4px" width="40" height="40" viewBox="-20 -20 40 40"><defs><radialGradient id="sk260" cx=".45" cy=".35" r=".7"><stop offset="0" stop-color="#3c3c3c"/><stop offset=".6" stop-color="#0e0e0e"/><stop offset="1" stop-color="#000"/></radialGradient></defs><path d="M-8.91 8.91 A12.6 12.6 0 1 1 8.91 8.91" fill="none" stroke="#e6e6e6" stroke-width="1.3"/><path d="M-8.84 8.84L-11.31 11.31" stroke="#e6e6e6" stroke-width="1.3"/><path d="M-12.26 2.44L-15.69 3.12" stroke="#e6e6e6" stroke-width="1.3"/><path d="M-11.55 -4.78L-14.78 -6.12" stroke="#e6e6e6" stroke-width="1.3"/><path d="M-6.94 -10.39L-8.89 -13.30" stroke="#e6e6e6" stroke-width="1.3"/><path d="M0.00 -12.50L0.00 -16.00" stroke="#e6e6e6" stroke-width="1.3"/><path d="M6.94 -10.39L8.89 -13.30" stroke="#e6e6e6" stroke-width="1.3"/><path d="M11.55 -4.78L14.78 -6.12" stroke="#e6e6e6" stroke-width="1.3"/><path d="M12.26 2.44L15.69 3.12" stroke="#e6e6e6" stroke-width="1.3"/><path d="M8.84 8.84L11.31 11.31" stroke="#e6e6e6" stroke-width="1.3"/><circle cx="0" cy="0" r="11.1" fill="url(#sk260)"/><path d="M0.00 -4.00L0.00 -11.50" stroke="#fff" stroke-width="1.8"/></svg>
<div class="sm c" style="left:241.5px;top:530.4px;width:10px;font-weight:bold;font-size:6px">-</div>
<div class="sm c" style="left:269.5px;top:530.4px;width:10px;font-weight:bold;font-size:7px">+</div>
<div class="sm c" style="left:240.5px;top:538.6px;width:40px">GAIN</div>
<svg class="a" style="left:297.5px;top:501.4px" width="40" height="40" viewBox="-20 -20 40 40"><defs><radialGradient id="sk317" cx=".45" cy=".35" r=".7"><stop offset="0" stop-color="#3c3c3c"/><stop offset=".6" stop-color="#0e0e0e"/><stop offset="1" stop-color="#000"/></radialGradient></defs><path d="M-8.91 8.91 A12.6 12.6 0 1 1 8.91 8.91" fill="none" stroke="#e6e6e6" stroke-width="1.3"/><path d="M-8.84 8.84L-11.31 11.31" stroke="#e6e6e6" stroke-width="1.3"/><path d="M-12.26 2.44L-15.69 3.12" stroke="#e6e6e6" stroke-width="1.3"/><path d="M-11.55 -4.78L-14.78 -6.12" stroke="#e6e6e6" stroke-width="1.3"/><path d="M-6.94 -10.39L-8.89 -13.30" stroke="#e6e6e6" stroke-width="1.3"/><path d="M0.00 -12.50L0.00 -16.00" stroke="#e6e6e6" stroke-width="1.3"/><path d="M6.94 -10.39L8.89 -13.30" stroke="#e6e6e6" stroke-width="1.3"/><path d="M11.55 -4.78L14.78 -6.12" stroke="#e6e6e6" stroke-width="1.3"/><path d="M12.26 2.44L15.69 3.12" stroke="#e6e6e6" stroke-width="1.3"/><path d="M8.84 8.84L11.31 11.31" stroke="#e6e6e6" stroke-width="1.3"/><circle cx="0" cy="0" r="11.1" fill="url(#sk317)"/><path d="M2.83 2.83L8.13 8.13" stroke="#fff" stroke-width="1.8"/></svg>
<div class="sm c" style="left:298.5px;top:530.4px;width:10px;font-weight:bold;font-size:6px">0</div>
<div class="sm c" style="left:326.5px;top:530.4px;width:10px;font-weight:bold;font-size:7px">+</div>
<div class="sm c" style="left:297.5px;top:538.6px;width:40px">VOLUME</div>
<svg class="a" style="left:363.01px;top:501.4px" width="40" height="40" viewBox="-20 -20 40 40"><defs><radialGradient id="sk383" cx=".45" cy=".35" r=".7"><stop offset="0" stop-color="#3c3c3c"/><stop offset=".6" stop-color="#0e0e0e"/><stop offset="1" stop-color="#000"/></radialGradient></defs><path d="M-8.91 8.91 A12.6 12.6 0 1 1 8.91 8.91" fill="none" stroke="#e6e6e6" stroke-width="1.3"/><path d="M-8.84 8.84L-11.31 11.31" stroke="#e6e6e6" stroke-width="1.3"/><path d="M-12.26 2.44L-15.69 3.12" stroke="#e6e6e6" stroke-width="1.3"/><path d="M-11.55 -4.78L-14.78 -6.12" stroke="#e6e6e6" stroke-width="1.3"/><path d="M-6.94 -10.39L-8.89 -13.30" stroke="#e6e6e6" stroke-width="1.3"/><path d="M0.00 -12.50L0.00 -16.00" stroke="#e6e6e6" stroke-width="1.3"/><path d="M6.94 -10.39L8.89 -13.30" stroke="#e6e6e6" stroke-width="1.3"/><path d="M11.55 -4.78L14.78 -6.12" stroke="#e6e6e6" stroke-width="1.3"/><path d="M12.26 2.44L15.69 3.12" stroke="#e6e6e6" stroke-width="1.3"/><path d="M8.84 8.84L11.31 11.31" stroke="#e6e6e6" stroke-width="1.3"/><circle cx="0" cy="0" r="11.1" fill="url(#sk383)"/><path d="M0.00 -4.00L0.00 -11.50" stroke="#fff" stroke-width="1.8"/></svg>
<div class="sm c" style="left:364.01px;top:530.4px;width:10px;font-weight:bold;font-size:6px">-</div>
<div class="sm c" style="left:392.01px;top:530.4px;width:10px;font-weight:bold;font-size:7px">+</div>
<div class="sm c" style="left:363.01px;top:538.6px;width:40px">LOW</div>
<svg class="a" style="left:398.51px;top:501.4px" width="40" height="40" viewBox="-20 -20 40 40"><defs><radialGradient id="sk418" cx=".45" cy=".35" r=".7"><stop offset="0" stop-color="#3c3c3c"/><stop offset=".6" stop-color="#0e0e0e"/><stop offset="1" stop-color="#000"/></radialGradient></defs><path d="M-8.91 8.91 A12.6 12.6 0 1 1 8.91 8.91" fill="none" stroke="#e6e6e6" stroke-width="1.3"/><path d="M-8.84 8.84L-11.31 11.31" stroke="#e6e6e6" stroke-width="1.3"/><path d="M-12.26 2.44L-15.69 3.12" stroke="#e6e6e6" stroke-width="1.3"/><path d="M-11.55 -4.78L-14.78 -6.12" stroke="#e6e6e6" stroke-width="1.3"/><path d="M-6.94 -10.39L-8.89 -13.30" stroke="#e6e6e6" stroke-width="1.3"/><path d="M0.00 -12.50L0.00 -16.00" stroke="#e6e6e6" stroke-width="1.3"/><path d="M6.94 -10.39L8.89 -13.30" stroke="#e6e6e6" stroke-width="1.3"/><path d="M11.55 -4.78L14.78 -6.12" stroke="#e6e6e6" stroke-width="1.3"/><path d="M12.26 2.44L15.69 3.12" stroke="#e6e6e6" stroke-width="1.3"/><path d="M8.84 8.84L11.31 11.31" stroke="#e6e6e6" stroke-width="1.3"/><circle cx="0" cy="0" r="11.1" fill="url(#sk418)"/><path d="M0.00 -4.00L0.00 -11.50" stroke="#fff" stroke-width="1.8"/></svg>
<div class="sm c" style="left:399.51px;top:530.4px;width:10px;font-weight:bold;font-size:6px">-</div>
<div class="sm c" style="left:427.51px;top:530.4px;width:10px;font-weight:bold;font-size:7px">+</div>
<div class="sm c" style="left:398.51px;top:538.6px;width:40px">MID</div>
<svg class="a" style="left:434.51px;top:501.4px" width="40" height="40" viewBox="-20 -20 40 40"><defs><radialGradient id="sk454" cx=".45" cy=".35" r=".7"><stop offset="0" stop-color="#3c3c3c"/><stop offset=".6" stop-color="#0e0e0e"/><stop offset="1" stop-color="#000"/></radialGradient></defs><path d="M-8.91 8.91 A12.6 12.6 0 1 1 8.91 8.91" fill="none" stroke="#e6e6e6" stroke-width="1.3"/><path d="M-8.84 8.84L-11.31 11.31" stroke="#e6e6e6" stroke-width="1.3"/><path d="M-12.26 2.44L-15.69 3.12" stroke="#e6e6e6" stroke-width="1.3"/><path d="M-11.55 -4.78L-14.78 -6.12" stroke="#e6e6e6" stroke-width="1.3"/><path d="M-6.94 -10.39L-8.89 -13.30" stroke="#e6e6e6" stroke-width="1.3"/><path d="M0.00 -12.50L0.00 -16.00" stroke="#e6e6e6" stroke-width="1.3"/><path d="M6.94 -10.39L8.89 -13.30" stroke="#e6e6e6" stroke-width="1.3"/><path d="M11.55 -4.78L14.78 -6.12" stroke="#e6e6e6" stroke-width="1.3"/><path d="M12.26 2.44L15.69 3.12" stroke="#e6e6e6" stroke-width="1.3"/><path d="M8.84 8.84L11.31 11.31" stroke="#e6e6e6" stroke-width="1.3"/><circle cx="0" cy="0" r="11.1" fill="url(#sk454)"/><path d="M0.00 -4.00L0.00 -11.50" stroke="#fff" stroke-width="1.8"/></svg>
<div class="sm c" style="left:435.51px;top:530.4px;width:10px;font-weight:bold;font-size:6px">-</div>
<div class="sm c" style="left:463.51px;top:530.4px;width:10px;font-weight:bold;font-size:7px">+</div>
<div class="sm c" style="left:434.51px;top:538.6px;width:40px">HIGH</div>
<svg class="a" style="left:470.51px;top:501.4px" width="40" height="40" viewBox="-20 -20 40 40"><defs><radialGradient id="sk490" cx=".45" cy=".35" r=".7"><stop offset="0" stop-color="#3c3c3c"/><stop offset=".6" stop-color="#0e0e0e"/><stop offset="1" stop-color="#000"/></radialGradient></defs><path d="M-8.91 8.91 A12.6 12.6 0 1 1 8.91 8.91" fill="none" stroke="#e6e6e6" stroke-width="1.3"/><path d="M-8.84 8.84L-11.31 11.31" stroke="#e6e6e6" stroke-width="1.3"/><path d="M-12.26 2.44L-15.69 3.12" stroke="#e6e6e6" stroke-width="1.3"/><path d="M-11.55 -4.78L-14.78 -6.12" stroke="#e6e6e6" stroke-width="1.3"/><path d="M-6.94 -10.39L-8.89 -13.30" stroke="#e6e6e6" stroke-width="1.3"/><path d="M0.00 -12.50L0.00 -16.00" stroke="#e6e6e6" stroke-width="1.3"/><path d="M6.94 -10.39L8.89 -13.30" stroke="#e6e6e6" stroke-width="1.3"/><path d="M11.55 -4.78L14.78 -6.12" stroke="#e6e6e6" stroke-width="1.3"/><path d="M12.26 2.44L15.69 3.12" stroke="#e6e6e6" stroke-width="1.3"/><path d="M8.84 8.84L11.31 11.31" stroke="#e6e6e6" stroke-width="1.3"/><circle cx="0" cy="0" r="11.1" fill="url(#sk490)"/><path d="M0.00 -4.00L0.00 -11.50" stroke="#fff" stroke-width="1.8"/></svg>
<div class="sm c" style="left:471.51px;top:530.4px;width:10px;font-weight:bold;font-size:6px">-</div>
<div class="sm c" style="left:499.51px;top:530.4px;width:10px;font-weight:bold;font-size:7px">+</div>
<div class="sm c" style="left:470.51px;top:538.6px;width:40px">GAIN</div>
</div>
</div>
</body></html>
